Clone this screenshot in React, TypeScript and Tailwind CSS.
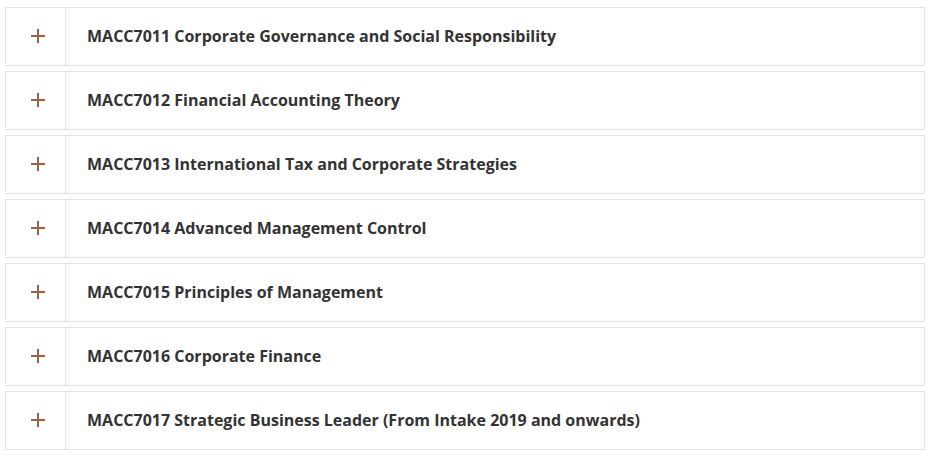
const courses = [
  "MACC7011 Corporate Governance and Social Responsibility",
  "MACC7012 Financial Accounting Theory",
  "MACC7013 International Tax and Corporate Strategies",
  "MACC7014 Advanced Management Control",
  "MACC7015 Principles of Management",
  "MACC7016 Corporate Finance",
  "MACC7017 Strategic Business Leader (From Intake 2019 and onwards)",
];

function PlusIcon() {
  return (
    <svg width="14" height="14" viewBox="0 0 14 14" className="block">
      <path d="M7 0v14M0 7h14" stroke="#a3603c" strokeWidth="2" />
    </svg>
  );
}

export default function App() {
  return (
    <div
      className="bg-white w-[934px] h-[456px] pt-[7px] pl-[5px] pr-[9px] flex flex-col gap-[5px]"
      style={{ fontFamily: '"Open Sans", sans-serif' }}
    >
      {courses.map((c) => (
        <div key={c} className="flex h-[59px] border border-[#e3e3e3] bg-white">
          <div className="w-[60px] shrink-0 flex items-center justify-center pl-[4px] pb-[2px] border-r border-dotted border-[#d6d6d6]">
            <PlusIcon />
          </div>
          <div className="flex items-center pl-[21px] pb-[2px] text-[16px] font-bold text-[#333333]">
            {c}
          </div>
        </div>
      ))}
    </div>
  );
}
